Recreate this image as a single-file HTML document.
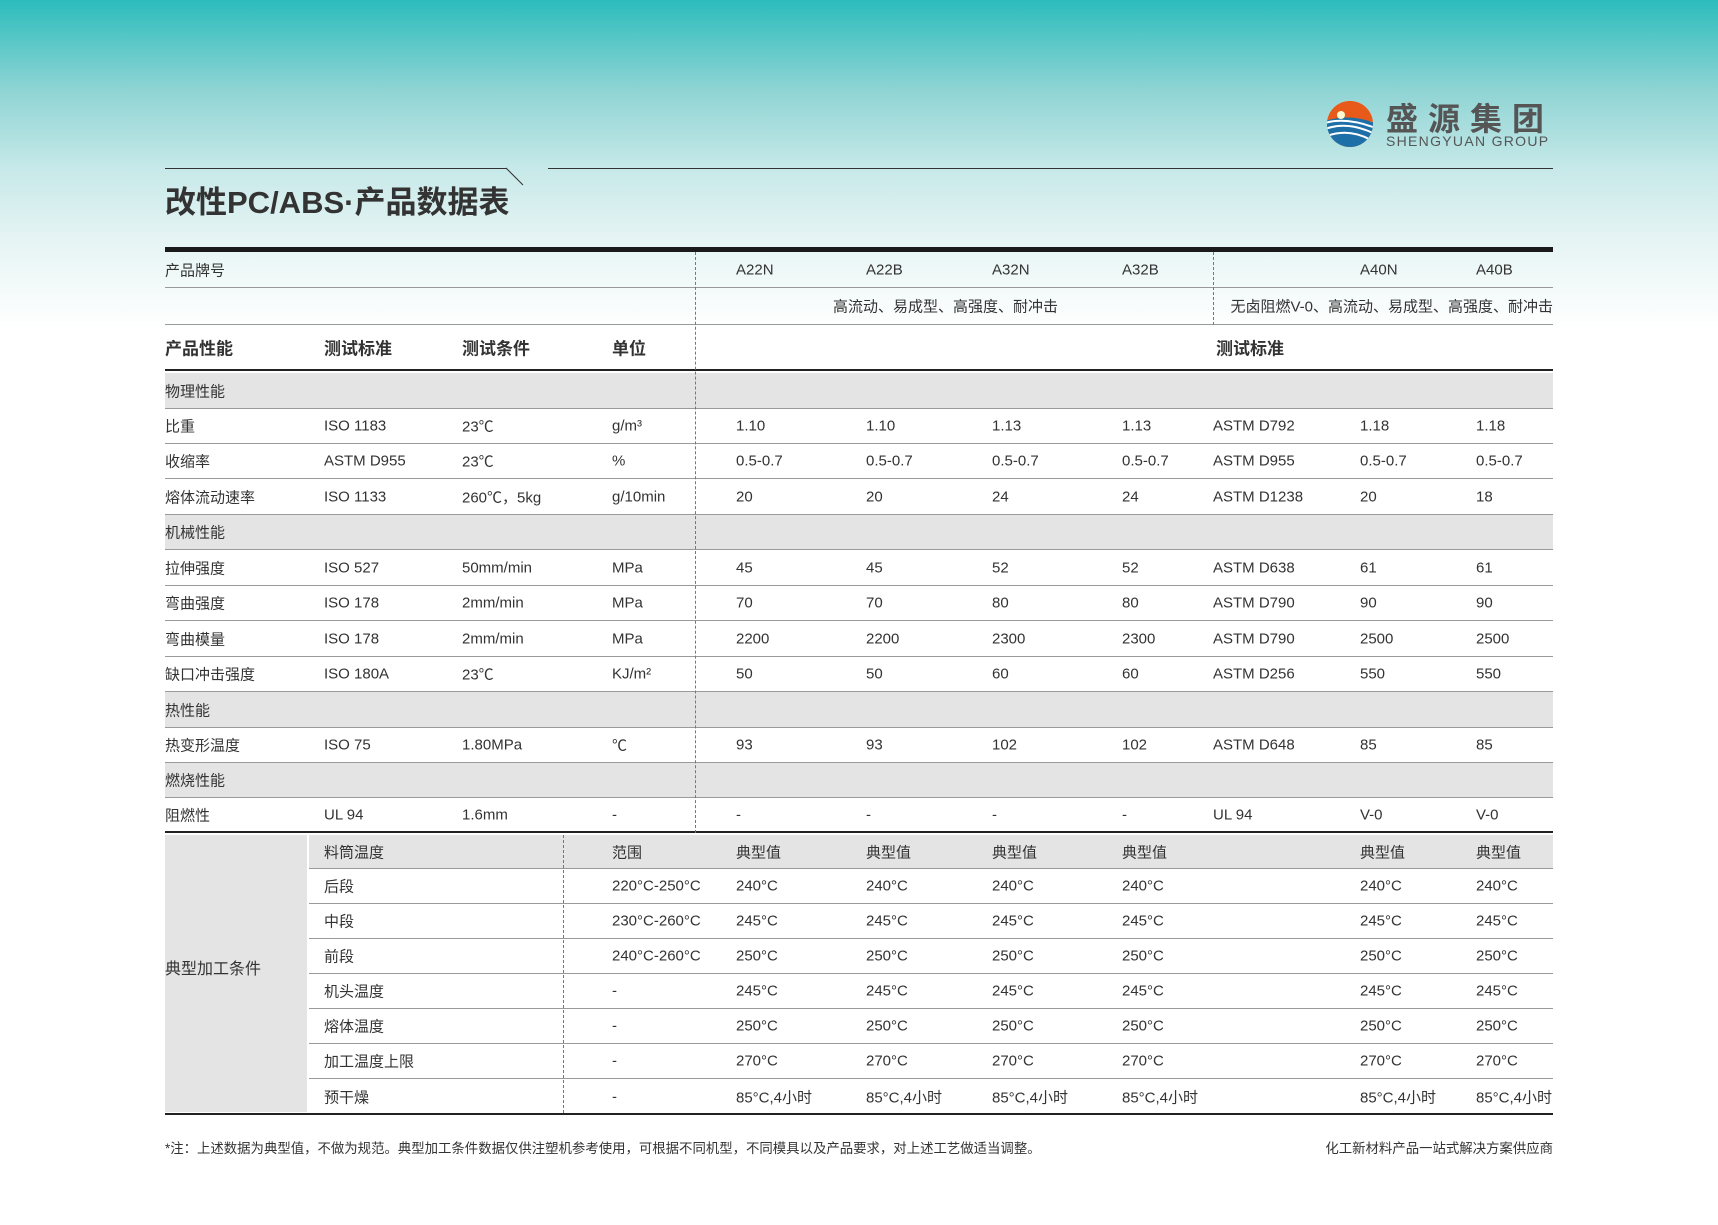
<!DOCTYPE html>
<html><head><meta charset="utf-8"><style>
*{margin:0;padding:0;box-sizing:border-box}
body{width:1718px;height:1225px;position:relative;overflow:hidden;font-family:"Liberation Sans","Noto Sans CJK SC",sans-serif;color:#333;
background:linear-gradient(180deg,#2cbcbc 0px,#8fd4d4 90px,#c8e9e9 170px,#e6f4f4 240px,#fff 330px,#fff 100%)}
.a{position:absolute}
.r{position:absolute;left:165px;width:1388px;border-bottom:1px solid #9a9a9a}
.r span{position:absolute;top:50%;transform:translateY(-50%);font-size:15px;white-space:nowrap}
.g{background:#e4e4e4}
.dv{position:absolute;width:0;border-left:1px dashed #777}
</style></head><body>
<svg class="a" style="left:1325px;top:99px" width="50" height="50" viewBox="0 0 50 50">
<defs><clipPath id="c"><circle cx="25" cy="25" r="23"/></clipPath></defs>
<g clip-path="url(#c)">
<rect x="0" y="0" width="50" height="50" fill="#f07a20"/>
<rect x="0" y="0" width="50" height="22" fill="#e85a1a"/>
<path d="M0 22 Q25 14 50 24 L50 50 L0 50Z" fill="#1d6fa8"/>
<path d="M0 24 Q20 18 48 28" stroke="#fff" stroke-width="2" fill="none"/>
<path d="M0 30 Q22 22 48 34" stroke="#fff" stroke-width="2" fill="none"/>
<path d="M2 37 Q24 29 46 41" stroke="#fff" stroke-width="2" fill="none"/>
<circle cx="16" cy="16" r="4" fill="#fff8d0"/>
</g></svg>
<div class="a" style="left:1386px;top:102px;font-size:32px;font-weight:bold;color:#555;letter-spacing:10px;line-height:34px">盛源集团</div>
<div class="a" style="left:1386px;top:133px;font-size:14px;color:#555;letter-spacing:1.3px">SHENGYUAN GROUP</div>
<div class="a" style="left:165px;top:168px;width:342px;height:1px;background:#333"></div>
<svg class="a" style="left:505px;top:167px" width="20" height="20"><line x1="1" y1="1" x2="18" y2="18" stroke="#333" stroke-width="1"/></svg>
<div class="a" style="left:548px;top:168px;width:1005px;height:1px;background:#333"></div>
<div class="a" style="left:165px;top:183px;font-size:31px;font-weight:bold;color:#333;line-height:40px">改性PC/ABS·产品数据表</div>
<div class="a" style="left:165px;top:247px;width:1388px;height:5px;background:#1a1a1a"></div>

<div class="r" style="top:252px;height:36px"><span style="left:0">产品牌号</span><span style="left:571px">A22N</span><span style="left:701px">A22B</span><span style="left:827px">A32N</span><span style="left:957px">A32B</span><span style="left:1195px">A40N</span><span style="left:1311px">A40B</span></div>
<div class="r" style="top:288px;height:37px"><span style="left:668px">高流动、易成型、高强度、耐冲击</span><span style="right:0">无卤阻燃V-0、高流动、易成型、高强度、耐冲击</span></div>
<div class="r" style="top:325px;height:46px;border-bottom:2px solid #222"><span style="left:0;font-size:17px;font-weight:bold">产品性能</span><span style="left:159px;font-size:17px;font-weight:bold">测试标准</span><span style="left:297px;font-size:17px;font-weight:bold">测试条件</span><span style="left:447px;font-size:17px;font-weight:bold">单位</span><span style="left:1051px;font-size:17px;font-weight:bold">测试标准</span></div>

<div class="r g" style="top:373px;height:36px"><span style="left:0">物理性能</span></div>
<div class="r" style="top:409px;height:35px"><span style="left:0">比重</span><span style="left:159px">ISO 1183</span><span style="left:297px">23℃</span><span style="left:447px">g/m³</span><span style="left:571px">1.10</span><span style="left:701px">1.10</span><span style="left:827px">1.13</span><span style="left:957px">1.13</span><span style="left:1048px">ASTM D792</span><span style="left:1195px">1.18</span><span style="left:1311px">1.18</span></div>
<div class="r" style="top:444px;height:35px"><span style="left:0">收缩率</span><span style="left:159px">ASTM D955</span><span style="left:297px">23℃</span><span style="left:447px">%</span><span style="left:571px">0.5-0.7</span><span style="left:701px">0.5-0.7</span><span style="left:827px">0.5-0.7</span><span style="left:957px">0.5-0.7</span><span style="left:1048px">ASTM D955</span><span style="left:1195px">0.5-0.7</span><span style="left:1311px">0.5-0.7</span></div>
<div class="r" style="top:479px;height:36px"><span style="left:0">熔体流动速率</span><span style="left:159px">ISO 1133</span><span style="left:297px">260℃，5kg</span><span style="left:447px">g/10min</span><span style="left:571px">20</span><span style="left:701px">20</span><span style="left:827px">24</span><span style="left:957px">24</span><span style="left:1048px">ASTM D1238</span><span style="left:1195px">20</span><span style="left:1311px">18</span></div>
<div class="r g" style="top:515px;height:35px"><span style="left:0">机械性能</span></div>
<div class="r" style="top:550px;height:36px"><span style="left:0">拉伸强度</span><span style="left:159px">ISO 527</span><span style="left:297px">50mm/min</span><span style="left:447px">MPa</span><span style="left:571px">45</span><span style="left:701px">45</span><span style="left:827px">52</span><span style="left:957px">52</span><span style="left:1048px">ASTM D638</span><span style="left:1195px">61</span><span style="left:1311px">61</span></div>
<div class="r" style="top:586px;height:35px"><span style="left:0">弯曲强度</span><span style="left:159px">ISO 178</span><span style="left:297px">2mm/min</span><span style="left:447px">MPa</span><span style="left:571px">70</span><span style="left:701px">70</span><span style="left:827px">80</span><span style="left:957px">80</span><span style="left:1048px">ASTM D790</span><span style="left:1195px">90</span><span style="left:1311px">90</span></div>
<div class="r" style="top:621px;height:36px"><span style="left:0">弯曲模量</span><span style="left:159px">ISO 178</span><span style="left:297px">2mm/min</span><span style="left:447px">MPa</span><span style="left:571px">2200</span><span style="left:701px">2200</span><span style="left:827px">2300</span><span style="left:957px">2300</span><span style="left:1048px">ASTM D790</span><span style="left:1195px">2500</span><span style="left:1311px">2500</span></div>
<div class="r" style="top:657px;height:35px"><span style="left:0">缺口冲击强度</span><span style="left:159px">ISO 180A</span><span style="left:297px">23℃</span><span style="left:447px">KJ/m²</span><span style="left:571px">50</span><span style="left:701px">50</span><span style="left:827px">60</span><span style="left:957px">60</span><span style="left:1048px">ASTM D256</span><span style="left:1195px">550</span><span style="left:1311px">550</span></div>
<div class="r g" style="top:692px;height:36px"><span style="left:0">热性能</span></div>
<div class="r" style="top:728px;height:35px"><span style="left:0">热变形温度</span><span style="left:159px">ISO 75</span><span style="left:297px">1.80MPa</span><span style="left:447px">℃</span><span style="left:571px">93</span><span style="left:701px">93</span><span style="left:827px">102</span><span style="left:957px">102</span><span style="left:1048px">ASTM D648</span><span style="left:1195px">85</span><span style="left:1311px">85</span></div>
<div class="r g" style="top:763px;height:35px"><span style="left:0">燃烧性能</span></div>
<div class="r" style="top:798px;height:35px;border-bottom:2px solid #222"><span style="left:0">阻燃性</span><span style="left:159px">UL 94</span><span style="left:297px">1.6mm</span><span style="left:447px">-</span><span style="left:571px">-</span><span style="left:701px">-</span><span style="left:827px">-</span><span style="left:957px">-</span><span style="left:1048px">UL 94</span><span style="left:1195px">V-0</span><span style="left:1311px">V-0</span></div>

<div class="a g" style="left:165px;top:835px;width:142px;height:277px"></div>
<div class="a" style="left:165px;top:955px;font-size:16px">典型加工条件</div>
<div class="r g" style="left:309px;width:1244px;top:835px;height:34px"><span style="left:15px">料筒温度</span><span style="left:303px">范围</span><span style="left:427px">典型值</span><span style="left:557px">典型值</span><span style="left:683px">典型值</span><span style="left:813px">典型值</span><span style="left:1051px">典型值</span><span style="left:1167px">典型值</span></div>
<div class="r" style="left:309px;width:1244px;top:869px;height:35px"><span style="left:15px">后段</span><span style="left:303px">220°C-250°C</span><span style="left:427px">240°C</span><span style="left:557px">240°C</span><span style="left:683px">240°C</span><span style="left:813px">240°C</span><span style="left:1051px">240°C</span><span style="left:1167px">240°C</span></div>
<div class="r" style="left:309px;width:1244px;top:904px;height:35px"><span style="left:15px">中段</span><span style="left:303px">230°C-260°C</span><span style="left:427px">245°C</span><span style="left:557px">245°C</span><span style="left:683px">245°C</span><span style="left:813px">245°C</span><span style="left:1051px">245°C</span><span style="left:1167px">245°C</span></div>
<div class="r" style="left:309px;width:1244px;top:939px;height:35px"><span style="left:15px">前段</span><span style="left:303px">240°C-260°C</span><span style="left:427px">250°C</span><span style="left:557px">250°C</span><span style="left:683px">250°C</span><span style="left:813px">250°C</span><span style="left:1051px">250°C</span><span style="left:1167px">250°C</span></div>
<div class="r" style="left:309px;width:1244px;top:974px;height:35px"><span style="left:15px">机头温度</span><span style="left:303px">-</span><span style="left:427px">245°C</span><span style="left:557px">245°C</span><span style="left:683px">245°C</span><span style="left:813px">245°C</span><span style="left:1051px">245°C</span><span style="left:1167px">245°C</span></div>
<div class="r" style="left:309px;width:1244px;top:1009px;height:35px"><span style="left:15px">熔体温度</span><span style="left:303px">-</span><span style="left:427px">250°C</span><span style="left:557px">250°C</span><span style="left:683px">250°C</span><span style="left:813px">250°C</span><span style="left:1051px">250°C</span><span style="left:1167px">250°C</span></div>
<div class="r" style="left:309px;width:1244px;top:1044px;height:35px"><span style="left:15px">加工温度上限</span><span style="left:303px">-</span><span style="left:427px">270°C</span><span style="left:557px">270°C</span><span style="left:683px">270°C</span><span style="left:813px">270°C</span><span style="left:1051px">270°C</span><span style="left:1167px">270°C</span></div>
<div class="r" style="left:309px;width:1244px;top:1079px;height:35px;border-bottom:none"><span style="left:15px">预干燥</span><span style="left:303px">-</span><span style="left:427px">85°C,4小时</span><span style="left:557px">85°C,4小时</span><span style="left:683px">85°C,4小时</span><span style="left:813px">85°C,4小时</span><span style="left:1051px">85°C,4小时</span><span style="left:1167px">85°C,4小时</span></div>
<div class="a" style="left:165px;top:1113px;width:1388px;height:2px;background:#222"></div>

<div class="dv" style="left:695px;top:252px;height:581px"></div>
<div class="dv" style="left:1213px;top:252px;height:73px"></div>
<div class="dv" style="left:563px;top:835px;height:278px"></div>

<div class="a" style="left:165px;top:1137px;font-size:13.4px">*注：上述数据为典型值，不做为规范。典型加工条件数据仅供注塑机参考使用，可根据不同机型，不同模具以及产品要求，对上述工艺做适当调整。</div>
<div class="a" style="right:165px;top:1137px;font-size:13.4px">化工新材料产品一站式解决方案供应商</div>
</body></html>
